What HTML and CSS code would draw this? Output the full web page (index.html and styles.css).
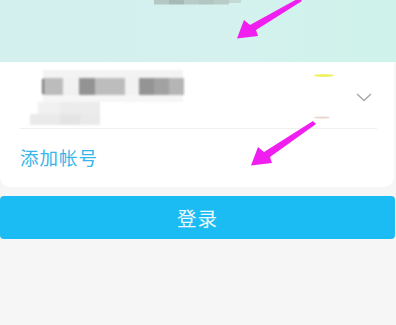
FILE: index.html
```html
<!DOCTYPE html>
<html lang="zh">
<head>
<meta charset="utf-8">
<link rel="stylesheet" href="styles.css">
</head>
<body>
<div class="page">
  <header class="header">
    <svg class="avatar-blur" width="92" height="6" viewBox="0 0 92 6">
      <rect x="0" y="0" width="15" height="4.5" fill="#b4c8c4"/>
      <rect x="15" y="0" width="15" height="4.5" fill="#a8bab6"/>
      <rect x="30" y="0" width="15" height="4.5" fill="#b7cbc7"/>
      <rect x="45" y="0" width="15" height="4.5" fill="#b2c6c2"/>
      <rect x="60" y="0" width="15" height="4.5" fill="#b9ccc8"/>
      <rect x="75" y="0" width="12" height="3" fill="#c6d8d4"/>
    </svg>
  </header>
  <section class="card">
    <div class="account">
      <svg class="mosaic" width="160" height="60" viewBox="0 0 160 60">
        <rect x="13" y="0" width="140" height="8" fill="#f3f3f3"/>
        <rect x="13" y="8" width="20" height="17" fill="#bcbcbc"/>
        <rect x="33" y="8" width="16" height="17" fill="#f1f1f1"/>
        <rect x="49" y="8" width="16" height="17" fill="#939393"/>
        <rect x="65" y="8" width="30" height="17" fill="#bdbdbd"/>
        <rect x="95" y="8" width="14" height="17" fill="#f2f2f2"/>
        <rect x="109" y="8" width="15" height="17" fill="#949494"/>
        <rect x="124" y="8" width="15" height="17" fill="#a2a2a2"/>
        <rect x="139" y="8" width="15" height="17" fill="#b5b5b5"/>
        <rect x="12" y="9" width="2" height="15" fill="#777"/>
        <rect x="13" y="25" width="140" height="7" fill="#f6f6f6"/>
        <rect x="8" y="32" width="22" height="12" fill="#f1f1f1"/>
        <rect x="30" y="32" width="40" height="12" fill="#ececec"/>
        <rect x="0" y="44" width="70" height="11" fill="#eaeaea"/>
        <rect x="30" y="44" width="20" height="11" fill="#e4e4e4"/>
      </svg>
      <svg class="chevron" width="16" height="9" viewBox="0 0 16 9">
        <polyline points="1,1 8,7.5 15,1" fill="none" stroke="#ababab" stroke-width="1.6"/>
      </svg>
    </div>
    <div class="divider"></div>
    <div class="add">添加帐号</div>
  </section>
  <button class="login">登录</button>
  <svg class="marks" width="396" height="325" viewBox="0 0 396 325">
    <ellipse cx="324" cy="75.5" rx="10" ry="1.3" fill="#eeee55"/>
    <ellipse cx="322" cy="117.5" rx="8" ry="1" fill="#e8d6cc"/>
    <g fill="#f01ff0">
      <polygon points="299,-2 302,1 256,30 258,36 237,38.5 244,20 250,25"/>
      <polygon transform="translate(14,127)" points="299,-6 302,-3 256,30 258,36 237,38.5 244,20 250,25"/>
    </g>
  </svg>
</div>
</body>
</html>
```

FILE: styles.css
```css
html, body {
  margin: 0;
  padding: 0;
}
body {
  background: #f6f6f6;
  font-family: "Noto Sans CJK SC", "Noto Sans", sans-serif;
  width: 396px;
  height: 325px;
  overflow: hidden;
}
.page {
  position: relative;
  width: 396px;
  height: 325px;
  display: flex;
  flex-direction: column;
}
.header {
  height: 62px;
  flex: none;
  background: linear-gradient(90deg, #d3f0ee 0%, #d5f1ef 50%, #cff3ea 100%);
  display: flex;
  justify-content: flex-start;
  padding-left: 154px;
  box-sizing: border-box;
}
.avatar-blur {
  display: block;
  filter: blur(0.5px);
}
.card {
  background: #ffffff;
  width: 394px;
  border-radius: 0 0 10px 10px;
  display: flex;
  flex-direction: column;
}
.account {
  height: 66px;
  display: flex;
  align-items: flex-start;
  justify-content: space-between;
  padding: 8px 22px 0 30px;
  box-sizing: border-box;
}
.mosaic {
  display: block;
  filter: blur(1px);
}
.chevron {
  display: block;
  margin-top: 23px;
}
.divider {
  height: 1px;
  background: #efefef;
  margin: 0 17px 0 20px;
}
.add {
  height: 58px;
  display: flex;
  align-items: center;
  padding-left: 20px;
  padding-bottom: 2px;
  box-sizing: border-box;
  color: #37b6ea;
  font-size: 18.5px;
  letter-spacing: 1px;
}
.login {
  margin: 9px 0 0 0;
  width: 395px;
  height: 43px;
  border: none;
  border-radius: 4px;
  background: #1bbcf3;
  color: #eef9fe;
  font-family: "Noto Sans CJK SC", "Noto Sans", sans-serif;
  font-size: 19.5px;
  letter-spacing: 1px;
  padding: 0;
}
.marks {
  position: absolute;
  left: 0;
  top: 0;
  pointer-events: none;
}
```
